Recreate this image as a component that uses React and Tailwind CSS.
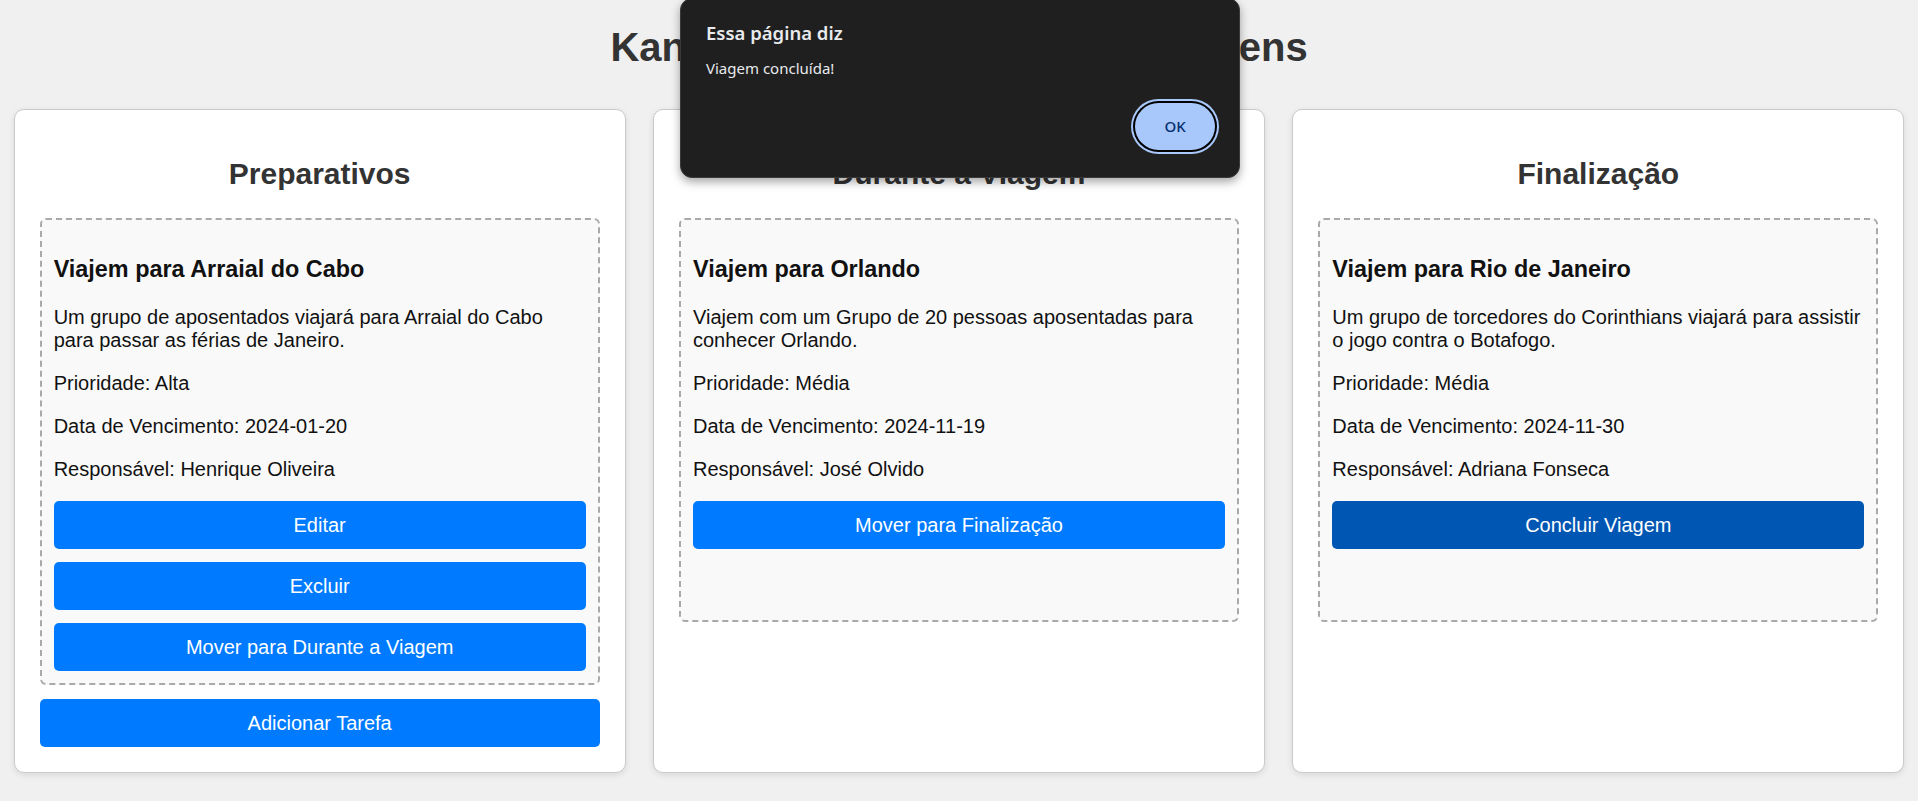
import React from "react";

const COLUMNS = [
  {
    id: "prep",
    title: "Preparativos",
    addButton: true,
    tasks: [
      {
        id: 1,
        title: "Viajem para Arraial do Cabo",
        description:
          "Um grupo de aposentados viajará para Arraial do Cabo para passar as férias de Janeiro.",
        priority: "Alta",
        due: "2024-01-20",
        owner: "Henrique Oliveira",
        actions: [
          { label: "Editar" },
          { label: "Excluir" },
          { label: "Mover para Durante a Viagem" },
        ],
      },
    ],
  },
  {
    id: "during",
    title: "Durante a Viagem",
    tasks: [
      {
        id: 2,
        title: "Viajem para Orlando",
        description:
          "Viajem com um Grupo de 20 pessoas aposentadas para conhecer Orlando.",
        priority: "Média",
        due: "2024-11-19",
        owner: "José Olvido",
        actions: [{ label: "Mover para Finalização" }],
      },
    ],
  },
  {
    id: "done",
    title: "Finalização",
    tasks: [
      {
        id: 3,
        title: "Viajem para Rio de Janeiro",
        description:
          "Um grupo de torcedores do Corinthians viajará para assistir o jogo contra o Botafogo.",
        priority: "Média",
        due: "2024-11-30",
        owner: "Adriana Fonseca",
        // hovered in the screenshot, hence the darker blue
        actions: [{ label: "Concluir Viagem", hover: true }],
      },
    ],
  },
];

function ActionButton({ label, hover, className = "" }) {
  return (
    <button
      type="button"
      className={
        "block w-full rounded-[5px] py-[12px] text-[20px] leading-[24px] text-white text-center " +
        (hover ? "bg-[#0056b3] " : "bg-[#007bff] ") +
        className
      }
    >
      {label}
    </button>
  );
}

function TaskCard({ task }) {
  return (
    <div className="min-h-[404px] rounded-[6px] border-2 border-dashed border-[#a9a9a9] bg-[#f9f9f9] px-[12px] pt-[12px] pb-[12px]">
      <h3 className="mt-[24px] mb-[23px] text-[23.4px] leading-[27px] font-bold text-[#111]">
        {task.title}
      </h3>
      <p className="mb-[20px] text-[20px] leading-[23px] text-[#111]">{task.description}</p>
      <p className="mb-[20px] text-[20px] leading-[23px] text-[#111]">Prioridade: {task.priority}</p>
      <p className="mb-[20px] text-[20px] leading-[23px] text-[#111]">
        Data de Vencimento: {task.due}
      </p>
      <p className="mb-[20px] text-[20px] leading-[23px] text-[#111]">Responsável: {task.owner}</p>
      <div className="flex flex-col gap-[13px]">
        {task.actions.map((a) => (
          <ActionButton key={a.label} label={a.label} hover={a.hover} />
        ))}
      </div>
    </div>
  );
}

function Column({ column }) {
  return (
    <div className="w-[612px] rounded-[10px] border border-[#cacaca] bg-white p-[25px] shadow-[0_2px_6px_rgba(0,0,0,0.1)]">
      <h2 className="mt-[22px] mb-[26px] text-center text-[30px] leading-[34.5px] font-bold text-[#333]">
        {column.title}
      </h2>
      {column.tasks.map((t) => (
        <TaskCard key={t.id} task={t} />
      ))}
      {column.addButton && <ActionButton label="Adicionar Tarefa" className="mt-[14px]" />}
    </div>
  );
}

function AlertDialog() {
  return (
    <div
      className="absolute top-[-2px] left-[680px] w-[560px] h-[180px] rounded-[12px] border border-[#3a3a3a] bg-[#1f1f1f] shadow-[0_4px_10px_rgba(0,0,0,0.35)] px-[25px] pt-[22px]"
      style={{ fontFamily: '"Noto Sans", "Open Sans", sans-serif' }}
    >
      <div className="text-[18.5px] leading-[24px] font-semibold text-[#e8eaed]">Essa página diz</div>
      <div className="mt-[13px] text-[15px] leading-[20px] text-[#e8eaed]">Viagem concluída!</div>
      <div className="absolute right-[24px] bottom-[27px]">
        <button
          type="button"
          className="w-[80px] h-[47px] rounded-full bg-[#a8c7fa] text-[15px] font-medium text-[#062e6f] shadow-[0_0_0_2px_#000,0_0_0_4px_#a8c7fa]"
        >
          OK
        </button>
      </div>
    </div>
  );
}

export default function App() {
  return (
    <div
      className="relative min-h-screen bg-[#f0f0f0] pt-[24px] pb-[20px]"
      style={{ fontFamily: '"Liberation Sans", Arial, sans-serif' }}
    >
      <h1 className="mb-[39px] text-center text-[40px] leading-[46px] font-bold text-[#333]">
        Kanban de Planejamento de Viagens
      </h1>
      <div className="flex justify-around">
        {COLUMNS.map((c) => (
          <Column key={c.id} column={c} />
        ))}
      </div>
      <AlertDialog />
    </div>
  );
}
